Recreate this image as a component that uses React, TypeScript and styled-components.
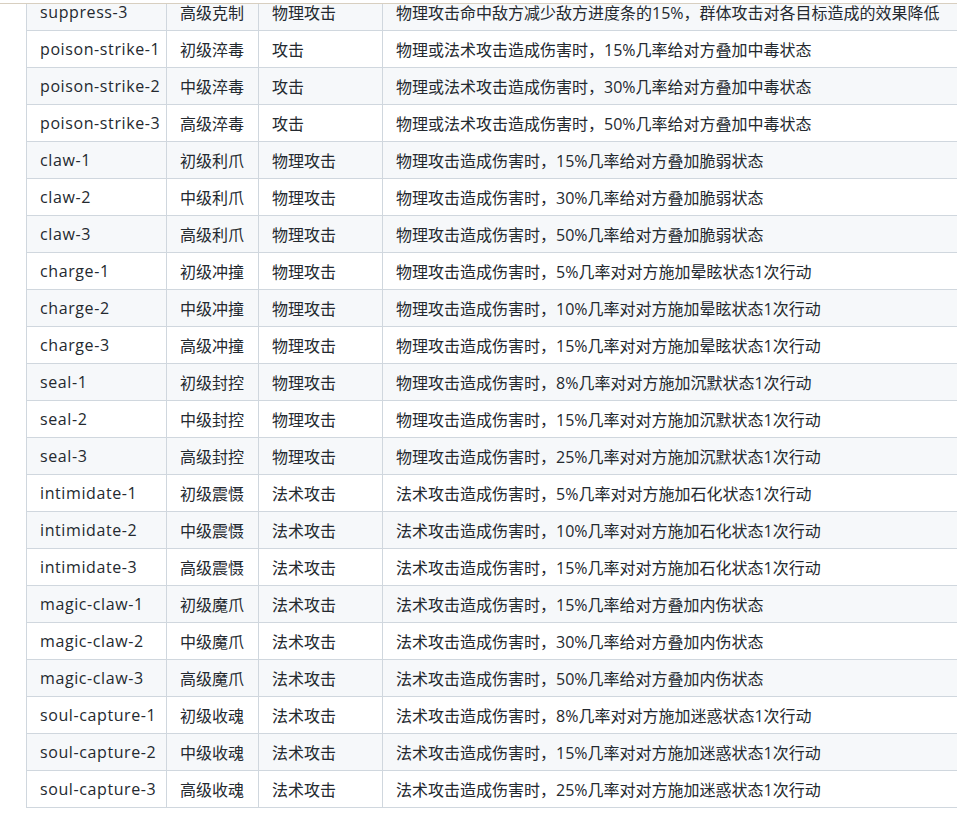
import React from 'react';
import styled, { createGlobalStyle } from 'styled-components';

const Global = createGlobalStyle`
  body {
    margin: 0;
    background: #fff;
    overflow: hidden;
    font-family: "Open Sans", "Noto Sans CJK SC", sans-serif;
    color: #24292f;
  }
`;

const Page = styled.div`
  width: 957px;
  height: 825px;
  overflow: hidden;
`;

const TopLine = styled.div`
  height: 3px;
  border-bottom: 1px solid #d8cfc0;
  position: relative;
  z-index: 1;
  background: #fff;
`;

const Table = styled.table`
  margin-left: 26px;
  margin-top: -11px;
  border-collapse: collapse;
  table-layout: fixed;
  width: 1000px;
  font-size: 16px;
`;

const Row = styled.tr<{ $shade: boolean }>`
  height: 37px;
  background: ${p => (p.$shade ? '#f6f8fa' : '#fff')};
`;

const Cell = styled.td<{ $w: number; $latin?: boolean }>`
  border: 1px solid #d0d7de;
  padding: 0 12px 0 13px;
  white-space: nowrap;
  overflow: hidden;
  width: ${p => p.$w - 25}px;
  letter-spacing: ${p => (p.$latin ? '0.6px' : '0')};
`;

const rows: [string, string, string, string][] = [
  ['suppress-3', '高级克制', '物理攻击', '物理攻击命中敌方减少敌方进度条的15%，群体攻击对各目标造成的效果降低'],
  ['poison-strike-1', '初级淬毒', '攻击', '物理或法术攻击造成伤害时，15%几率给对方叠加中毒状态'],
  ['poison-strike-2', '中级淬毒', '攻击', '物理或法术攻击造成伤害时，30%几率给对方叠加中毒状态'],
  ['poison-strike-3', '高级淬毒', '攻击', '物理或法术攻击造成伤害时，50%几率给对方叠加中毒状态'],
  ['claw-1', '初级利爪', '物理攻击', '物理攻击造成伤害时，15%几率给对方叠加脆弱状态'],
  ['claw-2', '中级利爪', '物理攻击', '物理攻击造成伤害时，30%几率给对方叠加脆弱状态'],
  ['claw-3', '高级利爪', '物理攻击', '物理攻击造成伤害时，50%几率给对方叠加脆弱状态'],
  ['charge-1', '初级冲撞', '物理攻击', '物理攻击造成伤害时，5%几率对对方施加晕眩状态1次行动'],
  ['charge-2', '中级冲撞', '物理攻击', '物理攻击造成伤害时，10%几率对对方施加晕眩状态1次行动'],
  ['charge-3', '高级冲撞', '物理攻击', '物理攻击造成伤害时，15%几率对对方施加晕眩状态1次行动'],
  ['seal-1', '初级封控', '物理攻击', '物理攻击造成伤害时，8%几率对对方施加沉默状态1次行动'],
  ['seal-2', '中级封控', '物理攻击', '物理攻击造成伤害时，15%几率对对方施加沉默状态1次行动'],
  ['seal-3', '高级封控', '物理攻击', '物理攻击造成伤害时，25%几率对对方施加沉默状态1次行动'],
  ['intimidate-1', '初级震慑', '法术攻击', '法术攻击造成伤害时，5%几率对对方施加石化状态1次行动'],
  ['intimidate-2', '中级震慑', '法术攻击', '法术攻击造成伤害时，10%几率对对方施加石化状态1次行动'],
  ['intimidate-3', '高级震慑', '法术攻击', '法术攻击造成伤害时，15%几率对对方施加石化状态1次行动'],
  ['magic-claw-1', '初级魔爪', '法术攻击', '法术攻击造成伤害时，15%几率给对方叠加内伤状态'],
  ['magic-claw-2', '中级魔爪', '法术攻击', '法术攻击造成伤害时，30%几率给对方叠加内伤状态'],
  ['magic-claw-3', '高级魔爪', '法术攻击', '法术攻击造成伤害时，50%几率给对方叠加内伤状态'],
  ['soul-capture-1', '初级收魂', '法术攻击', '法术攻击造成伤害时，8%几率对对方施加迷惑状态1次行动'],
  ['soul-capture-2', '中级收魂', '法术攻击', '法术攻击造成伤害时，15%几率对对方施加迷惑状态1次行动'],
  ['soul-capture-3', '高级收魂', '法术攻击', '法术攻击造成伤害时，25%几率对对方施加迷惑状态1次行动'],
];

const widths = [139, 91, 123, 647];

export default function App() {
  return (
    <Page>
      <Global />
      <TopLine />
      <Table>
        <tbody>
          {rows.map((r, i) => (
            <Row key={r[0]} $shade={i % 2 === 0}>
              {r.map((c, j) => (
                <Cell key={j} $w={widths[j]} $latin={j === 0}>{c}</Cell>
              ))}
            </Row>
          ))}
        </tbody>
      </Table>
    </Page>
  );
}
